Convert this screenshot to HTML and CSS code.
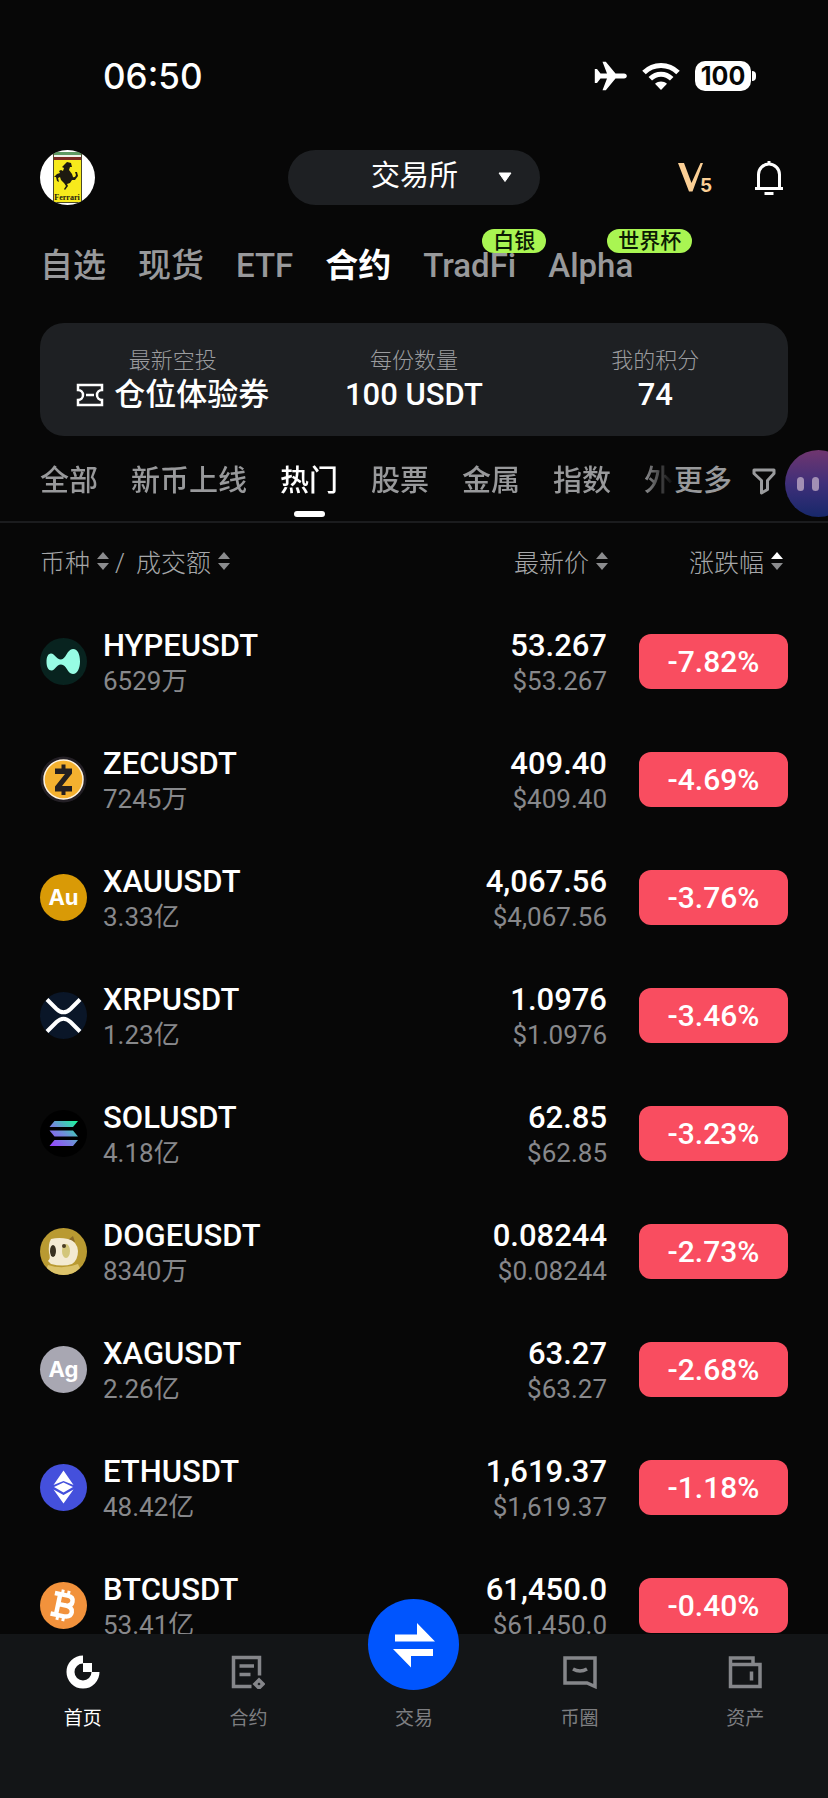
FILE: index.html
```html
<!DOCTYPE html>
<html lang="zh-CN">
<head>
    <meta charset="UTF-8">
    <meta name="viewport" content="width=device-width, initial-scale=1.0">
    <title>交易所</title>
    <link rel="stylesheet" href="styles.css">
</head>
<body>
    <div class="status-bar">
        <span class="time">06:50</span>
        <div class="status-icons">
            <svg width="33" height="30" viewBox="0 0 33 30" fill="#fff">
                <path d="M30 12.500c1.700 0 2.800 1.200 2.800 2.500s-1.100 2.500-2.800 2.500h-8.500L11.800 29.300H8.500l4.500-11.800H6.500L3 22H.8V8H3l3.500 4.500H13L8.500.7h3.300l9.700 11.800z"/>
            </svg>
            <svg width="38" height="28" viewBox="0 0 38 28">
                <g fill="none" stroke="#fff" stroke-width="5">
                    <path d="M2 10.500C11.500 1 26.500 1 36 10.500"/>
                    <path d="M8.300 16.800C14.500 10.800 23.500 10.800 29.700 16.800"/>
                </g>
                <path d="M19 28l-6-6.300c3.500-3 8.500-3 12 0z" fill="#fff"/>
            </svg>
            <div class="battery"><span class="battery-level">100</span></div>
        </div>
    </div>

    <header class="top-bar">
        <button class="avatar" aria-label="个人中心">
            <svg width="55" height="55" viewBox="0 0 55 55">
                <rect width="55" height="55" fill="#fff"/>
                <rect x="13" y="2" width="29" height="51" fill="#4b4a2a"/>
                <rect x="14" y="2" width="27" height="3" fill="#5f9a63"/>
                <rect x="14" y="5" width="27" height="2" fill="#f1f3ea"/>
                <rect x="14" y="7" width="27" height="3" fill="#7b2a22"/>
                <rect x="14" y="10" width="27" height="42" fill="#f7ea1c"/>
                <path d="M25 14l2-2 4 1 1 4-2 0-1 3 3 4 1 3q2 1 3-2l-1-3 2 0 1 4-3 4-3 0-2 3-3 1 1 2-3 4-1-1 2-3-2-3-3-3-1-3-2 1 1 4-2-1-1-4-2 0 3-3 3-1-1-2 2-1 2 1 1-3-2-1z" fill="#1d1a10"/>
                <text x="27" y="50" text-anchor="middle" class="avatar-text">Ferrari</text>
            </svg>
        </button>
        <button class="exchange-switch">
            <span>交易所</span>
            <svg width="14" height="11" viewBox="0 0 14 11"><path d="M1 1h12L7 9.500z" fill="#fff" stroke="#fff" stroke-linejoin="round"/></svg>
        </button>
        <div class="top-actions">
            <button class="icon-button" aria-label="V5">
                <svg width="36" height="34" viewBox="0 0 36 34">
                    <path d="M1 2h6l7.500 20L23.500 2h2.500L15.500 30.500H12z" fill="#fbcf95"/>
                    <text x="23" y="31" class="vip-level">5</text>
                </svg>
            </button>
            <button class="icon-button" aria-label="通知">
                <svg width="30" height="36" viewBox="0 0 30 36" fill="none" stroke="#fff" stroke-width="3">
                    <path d="M4.500 28.500V14.500a10.500 10.500 0 0 1 21 0V28.500M1 28.500H29M10.500 33.500h9M15 1V4.500"/>
                </svg>
            </button>
        </div>
    </header>

    <nav class="market-tabs">
        <a href="#">自选</a>
        <a href="#">现货</a>
        <a href="#">ETF</a>
        <a href="#" class="active">合约</a>
        <a href="#">TradFi<span class="tag">白银</span></a>
        <a href="#">Alpha<span class="tag">世界杯</span></a>
    </nav>

    <section class="airdrop-card">
        <div class="airdrop-item">
            <span class="airdrop-label">最新空投</span>
            <span class="airdrop-value">
                <svg width="28" height="24" viewBox="0 0 28 24" fill="none" stroke="#fff" stroke-width="2.500">
                    <path d="M2 2h24v5a5 5 0 0 0 0 10v5H2v-5a5 5 0 0 0 0-10zM10 12h8"/>
                </svg>
                仓位体验券
            </span>
        </div>
        <div class="airdrop-item">
            <span class="airdrop-label">每份数量</span>
            <span class="airdrop-value">100 USDT</span>
        </div>
        <div class="airdrop-item">
            <span class="airdrop-label">我的积分</span>
            <span class="airdrop-value">74</span>
        </div>
    </section>

    <nav class="category-bar">
        <div class="category-tabs">
            <a href="#">全部</a>
            <a href="#">新币上线</a>
            <a href="#" class="active">热门</a>
            <a href="#">股票</a>
            <a href="#">金属</a>
            <a href="#">指数</a>
            <a href="#">外</a>
        </div>
        <a href="#" class="more">更多</a>
        <button class="icon-button filter" aria-label="筛选">
            <svg width="24" height="27" viewBox="0 0 24 27" fill="none" stroke="#9a9b9d" stroke-width="3" stroke-linejoin="round">
                <path d="M2 2h20v3.500l-6.500 7V21.500L9.500 25V12.500L2 5.500z"/>
            </svg>
        </button>
    </nav>

    <main class="market-list">
        <table>
            <thead>
                <tr>
                    <th class="col-coin">
                        <button class="sort">币种<svg width="12" height="20" viewBox="0 0 12 20"><path d="M6 1l6 7H0z"/><path d="M6 19l6-7H0z"/></svg></button><span class="slash">/</span><button class="sort">成交额<svg width="12" height="20" viewBox="0 0 12 20"><path d="M6 1l6 7H0z"/><path d="M6 19l6-7H0z"/></svg></button>
                    </th>
                    <th class="col-price">
                        <button class="sort">最新价<svg width="12" height="20" viewBox="0 0 12 20"><path d="M6 1l6 7H0z"/><path d="M6 19l6-7H0z"/></svg></button>
                    </th>
                    <th class="col-change">
                        <button class="sort">涨跌幅<svg width="12" height="20" viewBox="0 0 12 20"><path d="M6 1l6 7H0z" class="on"/><path d="M6 19l6-7H0z"/></svg></button>
                    </th>
                </tr>
            </thead>
            <tbody>
                <tr>
                    <td>
                        <div class="coin">
                            <svg width="47" height="47" viewBox="0 0 47 47">
                                <circle cx="23.500" cy="23.500" r="23.500" fill="#08231f"/>
                                <path d="M6.500 24c0-5 1.500-8.500 4.500-8.500 4 0 5 6 10 6s6-10.500 12-10.500c5 0 7 6 7 12.500S37.500 36 33 36c-6 0-6-9.500-12-9.500-5 0-5.500 6-9.500 6-3 0-5-3.500-5-8.500z" fill="#97fce4"/>
                            </svg>
                            <div class="pair"><span class="name">HYPEUSDT</span><span class="sub">6529万</span></div>
                        </div>
                    </td>
                    <td class="price"><span class="name">53.267</span><span class="sub">$53.267</span></td>
                    <td class="change"><span class="badge">-7.82%</span></td>
                </tr>
                <tr>
                    <td>
                        <div class="coin">
                            <svg width="47" height="47" viewBox="0 0 47 47">
                                <circle cx="23.500" cy="23.500" r="23" fill="#231f25"/>
                                <circle cx="23.500" cy="23.500" r="19.500" fill="#f4b12f" stroke="#fdf3e0" stroke-width="1.500"/>
                                <path d="M15 12.500h6.500V8.500h4v4H32v5L22 30h10v5.500h-6.500V39h-4v-3.500H15v-5L25 18H15z" fill="#231f20"/>
                            </svg>
                            <div class="pair"><span class="name">ZECUSDT</span><span class="sub">7245万</span></div>
                        </div>
                    </td>
                    <td class="price"><span class="name">409.40</span><span class="sub">$409.40</span></td>
                    <td class="change"><span class="badge">-4.69%</span></td>
                </tr>
                <tr>
                    <td>
                        <div class="coin">
                            <span class="metal gold">Au</span>
                            <div class="pair"><span class="name">XAUUSDT</span><span class="sub">3.33亿</span></div>
                        </div>
                    </td>
                    <td class="price"><span class="name">4,067.56</span><span class="sub">$4,067.56</span></td>
                    <td class="change"><span class="badge">-3.76%</span></td>
                </tr>
                <tr>
                    <td>
                        <div class="coin">
                            <svg width="47" height="47" viewBox="0 0 47 47">
                                <circle cx="23.500" cy="23.500" r="23.500" fill="#0a1628"/>
                                <path d="M7 7.500l9.500 9.500q7 6.500 14 0l9.500-9.500M7 39.500l9.500-9.500q7-6.500 14 0l9.500 9.500" fill="none" stroke="#fff" stroke-width="4"/>
                            </svg>
                            <div class="pair"><span class="name">XRPUSDT</span><span class="sub">1.23亿</span></div>
                        </div>
                    </td>
                    <td class="price"><span class="name">1.0976</span><span class="sub">$1.0976</span></td>
                    <td class="change"><span class="badge">-3.46%</span></td>
                </tr>
                <tr>
                    <td>
                        <div class="coin">
                            <svg width="47" height="47" viewBox="0 0 47 47">
                                <defs>
                                    <linearGradient id="sol" gradientUnits="userSpaceOnUse" x1="12" y1="37" x2="36" y2="10">
                                        <stop offset="0" stop-color="#9945ff"/>
                                        <stop offset="0.500" stop-color="#6f8ed8"/>
                                        <stop offset="1" stop-color="#19fb9b"/>
                                    </linearGradient>
                                </defs>
                                <circle cx="23.500" cy="23.500" r="23.500" fill="#000"/>
                                <path d="M14.500 11H38l-5 6H9.500zM9.500 20.500H33l5 6H14.500zM14.500 30H38l-5 6H9.500z" fill="url(#sol)"/>
                            </svg>
                            <div class="pair"><span class="name">SOLUSDT</span><span class="sub">4.18亿</span></div>
                        </div>
                    </td>
                    <td class="price"><span class="name">62.85</span><span class="sub">$62.85</span></td>
                    <td class="change"><span class="badge">-3.23%</span></td>
                </tr>
                <tr>
                    <td>
                        <div class="coin">
                            <svg width="47" height="47" viewBox="0 0 47 47">
                                <defs><clipPath id="doge"><circle cx="23.500" cy="23.500" r="23.500"/></clipPath></defs>
                                <g clip-path="url(#doge)">
                                    <rect width="47" height="47" fill="#b99a32"/>
                                    <path d="M8 37q15 5 30-1l5 11H4z" fill="#dcc36b"/>
                                    <path d="M28 12l5-4 2 6z" fill="#8a6b28"/>
                                    <path d="M11 11q8-2 17 0 9 2 10 12 0 9-6 13-9 3-21 0l-3-3q3-3 1-8-1-9 2-14z" fill="#f3ead2"/>
                                    <ellipse cx="26" cy="23" rx="4" ry="7" fill="#d3c67a"/>
                                    <ellipse cx="13" cy="23" rx="3" ry="6" fill="#38301f"/>
                                    <circle cx="24" cy="18" r="2" fill="#4a3d24"/>
                                </g>
                            </svg>
                            <div class="pair"><span class="name">DOGEUSDT</span><span class="sub">8340万</span></div>
                        </div>
                    </td>
                    <td class="price"><span class="name">0.08244</span><span class="sub">$0.08244</span></td>
                    <td class="change"><span class="badge">-2.73%</span></td>
                </tr>
                <tr>
                    <td>
                        <div class="coin">
                            <span class="metal silver">Ag</span>
                            <div class="pair"><span class="name">XAGUSDT</span><span class="sub">2.26亿</span></div>
                        </div>
                    </td>
                    <td class="price"><span class="name">63.27</span><span class="sub">$63.27</span></td>
                    <td class="change"><span class="badge">-2.68%</span></td>
                </tr>
                <tr>
                    <td>
                        <div class="coin">
                            <svg width="47" height="47" viewBox="0 0 47 47">
                                <circle cx="23.500" cy="23.500" r="23.500" fill="#4450dc"/>
                                <path d="M23.500 6.500L33.500 21l-10-4-10 4zM23.500 18.500l9.500 4.500-9.500 5.500L14 23zM13.500 25.500l10 5.500 10-5.500-10 14z" fill="#fff"/>
                            </svg>
                            <div class="pair"><span class="name">ETHUSDT</span><span class="sub">48.42亿</span></div>
                        </div>
                    </td>
                    <td class="price"><span class="name">1,619.37</span><span class="sub">$1,619.37</span></td>
                    <td class="change"><span class="badge">-1.18%</span></td>
                </tr>
                <tr>
                    <td>
                        <div class="coin">
                            <svg width="47" height="47" viewBox="0 0 47 47">
                                <circle cx="23.500" cy="23.500" r="23.500" fill="#f2923c"/>
                                <g transform="rotate(12 23.500 23.500)" fill="none" stroke="#fff" stroke-width="4.500">
                                    <path d="M12.500 13H25.500q6 0 6 5t-6 5H18M25 23q8 0 8 5.500t-8 5.500H12.500M18 13V34"/>
                                    <path d="M20 8v5M26 8v5M20 34v5M26 34v5" stroke-width="3"/>
                                </g>
                            </svg>
                            <div class="pair"><span class="name">BTCUSDT</span><span class="sub">53.41亿</span></div>
                        </div>
                    </td>
                    <td class="price"><span class="name">61,450.0</span><span class="sub">$61,450.0</span></td>
                    <td class="change"><span class="badge">-0.40%</span></td>
                </tr>
            </tbody>
        </table>
    </main>

    <nav class="bottom-nav">
        <a href="#" class="active">
            <svg width="34" height="34" viewBox="0 0 34 34">
                <path d="M17 4.500A12.500 12.500 0 1 0 29.500 17" fill="none" stroke="#fff" stroke-width="8"/>
                <rect x="17" y="8" width="9" height="9" fill="#fff"/>
            </svg>
            <span>首页</span>
        </a>
        <a href="#">
            <svg width="34" height="34" viewBox="0 0 34 34" fill="none" stroke="#85868a" stroke-width="3.500">
                <path d="M20.500 31.500H2.500V2.500H28.500V20.500M8.500 11H23M8.500 19.500H19.500"/>
                <path d="M28 25l4 4-4 4-4-4z"/>
            </svg>
            <span>合约</span>
        </a>
        <a href="#" class="trade">
            <span class="trade-button">
                <svg width="46" height="46" viewBox="0 0 46 46" fill="#fff">
                    <path d="M4 12.500H26V1L44 19.500H4zM42 34H20V45.500L2 27H42z"/>
                </svg>
            </span>
            <span>交易</span>
        </a>
        <a href="#">
            <svg width="34" height="34" viewBox="0 0 34 34" fill="none" stroke="#85868a" stroke-width="3.500">
                <path d="M2 3H32V31.500L24 28H2zM10 14q7 4 14 0"/>
            </svg>
            <span>币圈</span>
        </a>
        <a href="#">
            <svg width="34" height="34" viewBox="0 0 34 34" fill="none" stroke="#85868a" stroke-width="3.500">
                <path d="M2.500 9.500V3H25V9.500M2.500 9.500H32V31.500H2.500zM23.500 16.500v9"/>
            </svg>
            <span>资产</span>
        </a>
    </nav>

    <button class="assistant" aria-label="助手"><i></i><i></i></button>
</body>
</html>
```
FILE: styles.css
```css
* {
    box-sizing: border-box;
}
body {
    margin: 0;
    height: 100vh;
    display: flex;
    flex-direction: column;
    overflow: hidden;
    background-color: #070707;
    color: #fff;
    font-family: Roboto, "Noto Sans CJK SC", sans-serif;
}
a {
    color: inherit;
    text-decoration: none;
}
button {
    margin: 0;
    padding: 0;
    border: none;
    background: none;
    color: inherit;
    font: inherit;
    cursor: pointer;
}
svg {
    display: block;
    flex: none;
}

.status-bar {
    display: flex;
    justify-content: space-between;
    align-items: center;
    height: 56px;
    margin-top: 48px;
    padding: 0 72px 0 103px;
}
.time {
    font-family: Inter, sans-serif;
    font-size: 35px;
    font-weight: 500;
}
.status-icons {
    display: flex;
    align-items: center;
    gap: 15px;
}
.battery {
    display: flex;
    align-items: center;
    gap: 1px;
}
.battery::after {
    content: "";
    width: 4px;
    height: 10px;
    border-radius: 0 5px 5px 0;
    background: #fff;
}
.battery-level {
    width: 56px;
    height: 30px;
    line-height: 30px;
    border-radius: 10px;
    background: #fff;
    color: #070707;
    font-family: Inter, sans-serif;
    font-size: 25px;
    font-weight: 700;
    text-align: center;
}

.top-bar {
    display: grid;
    grid-template-columns: 1fr 252px 1fr;
    align-items: center;
    margin-top: 46px;
    padding: 0 40px;
}
.avatar {
    width: 55px;
    height: 55px;
    border-radius: 50%;
    overflow: hidden;
}
.avatar-text {
    font: bold 8px "Liberation Serif", serif;
    fill: #1d1a10;
}
.exchange-switch {
    display: flex;
    justify-content: flex-end;
    align-items: center;
    gap: 40px;
    height: 55px;
    padding-right: 28px;
    border-radius: 28px;
    background: #1e2023;
    font-size: 29px;
    line-height: 40px;
}
.exchange-switch span {
    padding-bottom: 3px;
}
.top-actions {
    display: flex;
    justify-content: flex-end;
    align-items: center;
    gap: 41px;
    padding-right: 4px;
}
.vip-level {
    font: bold 19px Inter, sans-serif;
    fill: #fbcf95;
}

.market-tabs {
    display: flex;
    gap: 32px;
    margin-top: 37px;
    padding: 0 40px;
    color: #98999b;
    font-size: 33px;
    font-weight: 500;
    line-height: 48px;
}
.market-tabs a {
    position: relative;
}
.market-tabs .active {
    color: #fff;
    font-weight: 700;
}
.tag {
    position: absolute;
    top: -13px;
    left: 59px;
    padding: 0 11px;
    border-radius: 12px;
    background: #a9f552;
    color: #0b1a04;
    font-size: 21px;
    line-height: 24px;
    white-space: nowrap;
}

.airdrop-card {
    display: grid;
    grid-template-columns: 1fr 1fr 1fr;
    margin: 33px 40px 0;
    padding: 21px 12px 23px;
    border-radius: 24px;
    background: #1e2023;
}
.airdrop-item {
    display: flex;
    flex-direction: column;
    align-items: center;
}
.airdrop-label {
    color: #9b9c9f;
    font-size: 22px;
    font-weight: 300;
    line-height: 33px;
}
.airdrop-value {
    display: flex;
    align-items: center;
    gap: 10px;
    font-size: 31px;
    font-weight: 500;
    line-height: 36px;
}

.category-bar {
    display: flex;
    height: 87px;
    padding: 22px 52px 0 40px;
    border-bottom: 2px solid #1b1c1e;
    color: #98999b;
    font-size: 29px;
    font-weight: 500;
    line-height: 46px;
    white-space: nowrap;
}
.category-tabs {
    display: flex;
    flex: 1;
    gap: 33px;
    min-width: 0;
    overflow: hidden;
    mask-image: linear-gradient(to right, #000 calc(100% - 32px), transparent);
}
.category-tabs .active {
    display: flex;
    flex-direction: column;
    align-items: center;
    color: #fff;
}
.category-tabs .active::after {
    content: "";
    width: 31px;
    height: 6px;
    margin-top: 7px;
    border-radius: 3px;
    background: #fff;
}
.filter {
    height: 46px;
    margin-left: 20px;
}

.market-list {
    flex: 1;
    min-height: 0;
    padding: 0 40px;
    overflow-y: auto;
    scrollbar-width: none;
}
table {
    width: 100%;
    border-collapse: collapse;
    table-layout: fixed;
}
th,
td {
    padding: 0;
    text-align: left;
}
th {
    height: 79px;
    padding-bottom: 4px;
    color: #a6a7a9;
    font-size: 25px;
    font-weight: 300;
    white-space: nowrap;
}
tbody tr {
    height: 118px;
}
.col-price {
    width: 220px;
    text-align: right;
}
.col-change {
    width: 180px;
    padding-right: 5px;
    text-align: right;
}
.sort {
    display: inline-flex;
    align-items: center;
    gap: 7px;
}
.sort path {
    fill: #8b8c8e;
}
.sort .on {
    fill: #fff;
}
.slash {
    padding: 0 11px 0 6px;
}
.coin {
    display: flex;
    align-items: center;
    gap: 16px;
}
.metal {
    width: 47px;
    height: 47px;
    border-radius: 50%;
    font: bold 22px/47px Inter, sans-serif;
    text-align: center;
}
.gold {
    background: #d99a06;
}
.silver {
    background: #a8a7b2;
}
.pair,
.price {
    padding-top: 5px;
}
.name,
.sub {
    display: block;
}
.name {
    font-size: 31px;
    font-weight: 500;
    line-height: 36px;
}
.sub {
    color: #87888b;
    font-size: 26px;
    line-height: 35px;
}
.price {
    padding-right: 1px;
    text-align: right;
}
.badge {
    display: block;
    margin-left: 31px;
    height: 55px;
    border-radius: 12px;
    background: #f94d60;
    font-size: 30px;
    font-weight: 500;
    line-height: 56px;
    text-align: center;
}

.bottom-nav {
    display: grid;
    grid-template-columns: repeat(5, 1fr);
    height: 164px;
    background: #131517;
    color: #7d7e81;
    font-size: 19px;
    line-height: 28px;
}
.bottom-nav a {
    position: relative;
    display: flex;
    flex-direction: column;
    align-items: center;
    gap: 16px;
    padding-top: 21px;
}
.bottom-nav .active {
    color: #fff;
}
.bottom-nav .trade {
    padding-top: 71px;
}
.trade-button {
    position: absolute;
    top: -35px;
    display: flex;
    justify-content: center;
    align-items: center;
    width: 91px;
    height: 91px;
    border-radius: 50%;
    background: #0055fe;
}

.assistant {
    position: fixed;
    top: 450px;
    right: -24px;
    display: flex;
    align-items: center;
    gap: 8px;
    width: 67px;
    height: 67px;
    padding-left: 12px;
    border-radius: 50%;
    background: linear-gradient(#70366f, #3f2f79 50%, #17286a);
}
.assistant i {
    width: 7px;
    height: 14px;
    border-radius: 4px;
    background: #a28fb4;
}
```
